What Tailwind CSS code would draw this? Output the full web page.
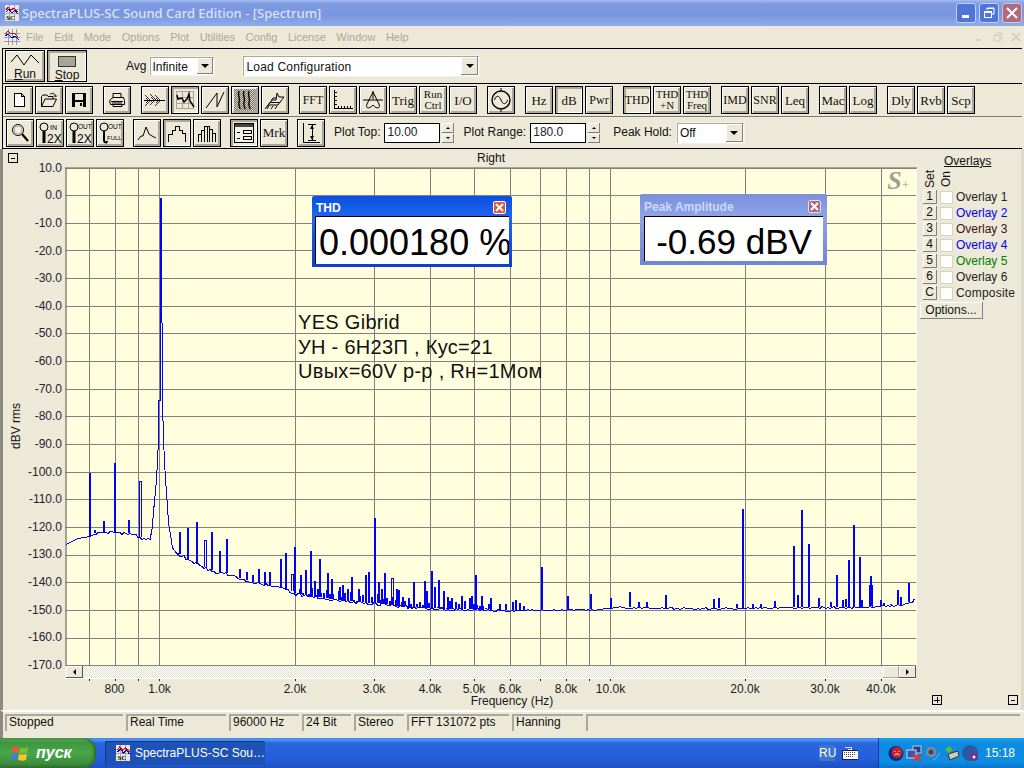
<!DOCTYPE html>
<html lang="en">
<head>
    <meta charset="UTF-8">
    <title>SpectraPLUS-SC Sound Card Edition - [Spectrum]</title>
    <script src="https://cdn.jsdelivr.net/npm/@tailwindcss/browser@4"></script>
</head>
<body class="bg-[#ece9d8]">
<div class="w-[1024px] h-[768px] overflow-hidden flex flex-col bg-[#ece9d8] text-[12px] text-[#111] font-['Liberation_Sans',sans-serif]">

    <!-- Title bar -->
    <div class="h-[26px] flex items-center bg-[linear-gradient(to_bottom,#a3bcf2_0,#7d99e0_4px,#7a96df_60%,#8fafec_100%)]">
        <svg class="ml-[5px] w-[14px] h-[16px]" viewBox="0 0 14 16" shape-rendering="crispEdges">
            <rect width="14" height="16" fill="#e8e8e0"/>
            <path d="M0 4H14M0 8H14M4 0V16M9 0V16" stroke="#aaa"/>
            <path d="M1 5L3 2L6 5L9 3L13 7" stroke="#d00" fill="none"/>
            <path d="M1 7L4 4L7 8L10 5L13 9" stroke="#00c" fill="none"/>
            <text x="1" y="15" font-size="7" font-weight="700" font-style="italic" fill="#000" class="font-['Liberation_Serif']">SC</text>
        </svg>
        <span class="ml-[3px] mt-px text-[13px] font-medium text-[#d9e4f9] font-['Noto_Sans',sans-serif]">SpectraPLUS-SC Sound Card Edition - [Spectrum]</span>
        <div class="ml-auto mr-[2px] flex gap-[3px]">
            <div class="w-[20px] h-[20px] rounded-[3px] border border-[#c4d2f4] bg-[#4f74da] flex items-end pl-[5px] pb-[4px]"><div class="w-[7px] h-[3px] bg-white"></div></div>
            <div class="w-[20px] h-[20px] rounded-[3px] border border-[#c4d2f4] bg-[#4f74da] flex items-center justify-center">
                <svg class="w-[12px] h-[12px]" viewBox="0 0 12 12" fill="none" stroke="#fff"><path d="M4 3V1H11V7H8.5M4 1.5H11" /><rect x="1.5" y="4.5" width="7" height="6"/><path d="M1.5 5.5H8.5"/></svg>
            </div>
            <div class="w-[20px] h-[20px] rounded-[3px] border border-[#dcc4cf] bg-[#b06a80] flex items-center justify-center">
                <svg class="w-[12px] h-[12px]" viewBox="0 0 12 12" stroke="#fff" stroke-width="2"><path d="M1 1L11 11M11 1L1 11"/></svg>
            </div>
        </div>
    </div>

    <!-- Menu bar -->
    <div class="h-[22px] flex items-center text-[#aca899] text-[11px]">
        <svg class="ml-[4px] w-[16px] h-[16px]" viewBox="0 0 16 16" shape-rendering="crispEdges">
            <rect width="16" height="16" fill="#eee"/>
            <path d="M0 4H16M0 8H16M0 12H16M4 0V16M8 0V16M12 0V16" stroke="#999"/>
            <path d="M1 5L4 2L7 5L10 4L14 8" stroke="#d00" fill="none"/>
            <path d="M1 7L4 5L8 9L11 7L15 11" stroke="#00c" fill="none"/>
        </svg>
        <div class="ml-[6px] flex gap-[10.5px]">
            <span>File</span><span>Edit</span><span>Mode</span><span>Options</span><span>Plot</span><span>Utilities</span><span>Config</span><span>License</span><span>Window</span><span>Help</span>
        </div>
        <div class="ml-auto mr-[3px] flex gap-[8px]">
            <svg class="w-[10px] h-[10px]" viewBox="0 0 10 10" fill="none" stroke="#cfccbc" stroke-width="1.5"><path d="M1 8H7"/></svg>
            <svg class="w-[10px] h-[10px]" viewBox="0 0 10 10" fill="none" stroke="#cfccbc"><path d="M3 3V1H9V6H7"/><rect x="1" y="3.5" width="6" height="5.5"/></svg>
            <svg class="w-[10px] h-[10px]" viewBox="0 0 10 10" fill="none" stroke="#cfccbc" stroke-width="1.6"><path d="M1 1L9 9M9 1L1 9"/></svg>
        </div>
    </div>

    <!-- Toolbars -->
    <div class="ml-[2px] mr-[2px] border-l border-black">
        <!-- Run / config row -->
        <div class="h-[36px] border-y border-black flex items-center pl-[2px]">
            <button class="w-[40px] h-[32px] border border-black bg-[#ece9d8] shadow-[inset_1px_1px_0_#fff,inset_-2px_-2px_0_#aca899] flex flex-col items-center leading-none text-[12px]">
                <svg class="mt-[3px] w-[30px] h-[13px]" viewBox="0 0 30 13" fill="none" stroke="#000"><path d="M1 8L7 1L14 11L21 1L29 9"/></svg>
                <span class="mt-[1px]"><u>R</u>un</span>
            </button>
            <button class="ml-[2px] w-[40px] h-[32px] border border-black bg-[#ece9d8] shadow-[inset_2px_2px_0_#aca899,inset_-1px_-1px_0_#fff] flex flex-col items-center leading-none text-[12px]">
                <div class="mt-[5px] w-[18px] h-[11px] bg-[#a8a598] border border-[#333]"></div>
                <span class="mt-[2px]"><u>S</u>top</span>
            </button>
            <span class="ml-[39px] text-[12px]">Avg</span>
            <div class="ml-[3px] w-[66px] h-[20px] bg-white border border-[#f4f2e8] flex items-center pl-[2px] shadow-[inset_1px_1px_0_#aca899]">
                <span class="pt-px">Infinite</span>
                <div class="ml-auto mr-[1px] w-[16px] h-[16px] bg-[#ece9d8] shadow-[inset_-1px_-1px_0_#808080,inset_1px_1px_0_#fff] flex items-center justify-center"><div class="border-x-[4px] border-x-transparent border-t-[4px] border-t-black"></div></div>
            </div>
            <div class="ml-[27px] w-[238px] h-[22px] bg-white border border-[#f4f2e8] flex items-center pl-[3px] shadow-[inset_1px_1px_0_#aca899]">
                <span class="pt-px tracking-[0.2px]">Load Configuration</span>
                <div class="ml-auto mr-[1px] w-[17px] h-[18px] bg-[#ece9d8] shadow-[inset_-1px_-1px_0_#808080,inset_1px_1px_0_#fff] flex items-center justify-center"><div class="border-x-[4px] border-x-transparent border-t-[4px] border-t-black"></div></div>
            </div>
        </div>

        <!-- Mode row -->
        <div class="h-[33px] border-b border-[#7d7b70] flex items-center pl-[2px] gap-[10px] text-[12px] leading-none font-['Liberation_Serif',serif]">
            <div class="flex gap-[2px]">
                <button class="w-[28px] h-[28px] border border-black bg-[#ece9d8] shadow-[inset_1px_1px_0_#fff,inset_-2px_-2px_0_#aca899] flex items-center justify-center">
                    <svg class="w-[14px] h-[16px]" viewBox="0 0 14 16" shape-rendering="crispEdges"><path d="M2.5 1.5H9.5L12.5 4.5V14.5H2.5Z" fill="#fff" stroke="#000"/><path d="M9.5 1.5V4.5H12.5" fill="none" stroke="#000"/></svg>
                </button>
                <button class="w-[28px] h-[28px] border border-black bg-[#ece9d8] shadow-[inset_1px_1px_0_#fff,inset_-2px_-2px_0_#aca899] flex items-center justify-center">
                    <svg class="w-[18px] h-[16px]" viewBox="0 0 18 16" fill="none" stroke="#000"><path d="M1.5 14.5V4.5L3 3H7L8 4.5H13V7"/><path d="M1.5 14.5H13L16.5 7H5L1.5 14.5Z" fill="#ece9d8"/><path d="M10 2.5C12 0.5 15 1 15.5 4M14 3.5L15.5 5L17 3.5"/></svg>
                </button>
                <button class="w-[28px] h-[28px] border border-black bg-[#ece9d8] shadow-[inset_1px_1px_0_#fff,inset_-2px_-2px_0_#aca899] flex items-center justify-center">
                    <svg class="w-[16px] h-[16px]" viewBox="0 0 16 16" shape-rendering="crispEdges"><rect x="1" y="1" width="14" height="14" fill="#000"/><rect x="4" y="2" width="8" height="6" fill="#ece9d8"/><rect x="4" y="10" width="8" height="5" fill="#ece9d8"/><rect x="9" y="11" width="2" height="3" fill="#000"/></svg>
                </button>
            </div>
            <button class="w-[28px] h-[28px] border border-black bg-[#ece9d8] shadow-[inset_1px_1px_0_#fff,inset_-2px_-2px_0_#aca899] flex items-center justify-center">
                <svg class="w-[18px] h-[16px]" viewBox="0 0 18 16" fill="none" stroke="#000"><path d="M5 5.5V1.5H13V5.5"/><path d="M1.5 8.5L5 5.5H15.5L16.5 8.5V12.5H2.5L1.5 8.5Z" fill="#ece9d8"/><path d="M3 9.5H15M4 11H14M5 12.5V14.5H14V12.5"/></svg>
            </button>
            <div class="flex gap-[2px]">
                <button class="w-[28px] h-[28px] border border-black bg-[#ece9d8] shadow-[inset_1px_1px_0_#fff,inset_-2px_-2px_0_#aca899] flex items-center justify-center">
                    <svg class="w-[22px] h-[16px]" viewBox="0 0 22 16" shape-rendering="crispEdges">
                        <defs><pattern id="dither" width="2" height="2" patternUnits="userSpaceOnUse"><rect width="1" height="1" fill="#333"/><rect x="1" y="1" width="1" height="1" fill="#333"/></pattern></defs>
                        <path d="M1 2L8 8L1 14L3 8Z" fill="url(#dither)"/><path d="M6 2L13 8L6 14L8 8Z" fill="url(#dither)"/><path d="M11 2L18 8L11 14L13 8Z" fill="url(#dither)"/><path d="M0 8H21" fill="none" stroke="#000"/>
                    </svg>
                </button>
                <button class="w-[28px] h-[28px] border border-black bg-[#ece9d8] shadow-[inset_2px_2px_0_#aca899,inset_-1px_-1px_0_#fff] flex items-center justify-center">
                    <svg class="w-[20px] h-[20px]" viewBox="0 0 20 20" fill="none" shape-rendering="crispEdges"><path d="M1.5 1.5H18.5V18.5H1.5ZM1.5 7.5H18.5M1.5 13.5H18.5M7.5 1.5V18.5M13.5 1.5V18.5" stroke="#a8a598"/><path d="M2 5L3 9L7 8L9 12L12 9L14 4L15 11L19 17" stroke="#000" stroke-width="1.5" shape-rendering="auto"/></svg>
                </button>
                <button class="w-[28px] h-[28px] border border-black bg-[#ece9d8] shadow-[inset_1px_1px_0_#fff,inset_-2px_-2px_0_#aca899] flex items-center justify-center">
                    <svg class="w-[20px] h-[20px]" viewBox="0 0 20 20" fill="none" stroke="#000"><path d="M1 18L12 3V17L19 2"/></svg>
                </button>
                <button class="w-[28px] h-[28px] border border-black bg-[#ece9d8] shadow-[inset_1px_1px_0_#fff,inset_-2px_-2px_0_#aca899] flex items-center justify-center">
                    <svg class="w-[22px] h-[22px]" viewBox="0 0 22 22" fill="none"><rect width="22" height="22" fill="#d0cdbd"/><rect width="22" height="22" fill="url(#dither)" opacity="0.55"/><path d="M5 2C3 7 7 9 5 13C4 16 6 18 6 20M10 2C8 7 12 9 10 13C9 16 11 18 11 20M15 2C13 7 17 9 15 13C14 16 16 18 16 20" stroke="#000" stroke-width="1.4"/></svg>
                </button>
                <button class="w-[28px] h-[28px] border border-black bg-[#ece9d8] shadow-[inset_1px_1px_0_#fff,inset_-2px_-2px_0_#aca899] flex items-center justify-center">
                    <svg class="w-[22px] h-[20px]" viewBox="0 0 22 20" fill="none" stroke="#000"><path d="M1 19L4 15H14L16 12M3 16.5L6 12.5H16L18 9.5M5 14L8 10H12L13 3L15 7H20L18 9.5M7 11L9 8H12M3 19L5 16M7 19L9 16M11 19L13 16"/></svg>
                </button>
            </div>
            <div class="flex gap-[2px]">
                <button class="w-[28px] h-[28px] border border-black bg-[#ece9d8] shadow-[inset_1px_1px_0_#fff,inset_-2px_-2px_0_#aca899] flex items-center justify-center text-[12px]">FFT</button>
                <button class="w-[28px] h-[28px] border border-black bg-[#ece9d8] shadow-[inset_1px_1px_0_#fff,inset_-2px_-2px_0_#aca899] flex items-center justify-center">
                    <svg class="w-[22px] h-[22px]" viewBox="0 0 22 22" fill="none" stroke="#000" shape-rendering="crispEdges"><path d="M2.5 1V19.5H21M2.5 3.5H5M2.5 7.5H5M2.5 11.5H5M2.5 15.5H5M6.5 19.5V17M9.5 19.5V17M12.5 19.5V17M15.5 19.5V17M18.5 19.5V17"/></svg>
                </button>
                <button class="w-[28px] h-[28px] border border-black bg-[#ece9d8] shadow-[inset_1px_1px_0_#fff,inset_-2px_-2px_0_#aca899] flex items-center justify-center">
                    <svg class="w-[22px] h-[22px]" viewBox="0 0 22 22" fill="none" stroke="#000"><path d="M11 2V10M1 11H21M11 3L5 15C3 20 8 20 11 16C14 20 19 20 17 15L11 3"/></svg>
                </button>
                <button class="w-[28px] h-[28px] border border-black bg-[#ece9d8] shadow-[inset_1px_1px_0_#fff,inset_-2px_-2px_0_#aca899] flex items-center justify-center text-[13px]">Trig</button>
                <button class="w-[28px] h-[28px] border border-black bg-[#ece9d8] shadow-[inset_1px_1px_0_#fff,inset_-2px_-2px_0_#aca899] flex flex-col items-center justify-center text-[11px]"><span>Run</span><span>Ctrl</span></button>
                <button class="w-[28px] h-[28px] border border-black bg-[#ece9d8] shadow-[inset_1px_1px_0_#fff,inset_-2px_-2px_0_#aca899] flex items-center justify-center text-[13px]">I/O</button>
            </div>
            <button class="w-[28px] h-[28px] border border-black bg-[#ece9d8] shadow-[inset_1px_1px_0_#fff,inset_-2px_-2px_0_#aca899] flex items-center justify-center">
                <svg class="w-[22px] h-[24px]" viewBox="0 0 22 24" fill="none" stroke="#000"><circle cx="11" cy="12" r="9" stroke-width="1.4"/><path d="M11 0V3M11 21V24M4.5 12C6 7 9 7 11 12C13 17 16 17 17.5 12"/></svg>
            </button>
            <div class="flex gap-[2px] text-[13px]">
                <button class="w-[28px] h-[28px] border border-black bg-[#ece9d8] shadow-[inset_1px_1px_0_#fff,inset_-2px_-2px_0_#aca899] flex items-center justify-center">Hz</button>
                <button class="w-[28px] h-[28px] border border-black bg-[#ece9d8] shadow-[inset_2px_2px_0_#aca899,inset_-1px_-1px_0_#fff] flex items-center justify-center">dB</button>
                <button class="w-[28px] h-[28px] border border-black bg-[#ece9d8] shadow-[inset_1px_1px_0_#fff,inset_-2px_-2px_0_#aca899] flex items-center justify-center text-[12px]">Pwr</button>
            </div>
            <div class="flex gap-[2px] text-[11px]">
                <button class="w-[28px] h-[28px] border border-black bg-[#ece9d8] shadow-[inset_2px_2px_0_#aca899,inset_-1px_-1px_0_#fff] flex items-center justify-center text-[12px]">THD</button>
                <button class="w-[28px] h-[28px] border border-black bg-[#ece9d8] shadow-[inset_1px_1px_0_#fff,inset_-2px_-2px_0_#aca899] flex flex-col items-center justify-center"><span>THD</span><span>+N</span></button>
                <button class="w-[28px] h-[28px] border border-black bg-[#ece9d8] shadow-[inset_1px_1px_0_#fff,inset_-2px_-2px_0_#aca899] flex flex-col items-center justify-center"><span>THD</span><span>Freq</span></button>
            </div>
            <div class="flex gap-[2px] text-[12px]">
                <button class="w-[28px] h-[28px] border border-black bg-[#ece9d8] shadow-[inset_1px_1px_0_#fff,inset_-2px_-2px_0_#aca899] flex items-center justify-center">IMD</button>
                <button class="w-[28px] h-[28px] border border-black bg-[#ece9d8] shadow-[inset_1px_1px_0_#fff,inset_-2px_-2px_0_#aca899] flex items-center justify-center">SNR</button>
                <button class="w-[28px] h-[28px] border border-black bg-[#ece9d8] shadow-[inset_1px_1px_0_#fff,inset_-2px_-2px_0_#aca899] flex items-center justify-center text-[13px]">Leq</button>
            </div>
            <div class="flex gap-[2px] text-[13px]">
                <button class="w-[28px] h-[28px] border border-black bg-[#ece9d8] shadow-[inset_1px_1px_0_#fff,inset_-2px_-2px_0_#aca899] flex items-center justify-center">Mac</button>
                <button class="w-[28px] h-[28px] border border-black bg-[#ece9d8] shadow-[inset_1px_1px_0_#fff,inset_-2px_-2px_0_#aca899] flex items-center justify-center">Log</button>
            </div>
            <div class="flex gap-[2px] text-[13px]">
                <button class="w-[28px] h-[28px] border border-black bg-[#ece9d8] shadow-[inset_1px_1px_0_#fff,inset_-2px_-2px_0_#aca899] flex items-center justify-center">Dly</button>
                <button class="w-[28px] h-[28px] border border-black bg-[#ece9d8] shadow-[inset_1px_1px_0_#fff,inset_-2px_-2px_0_#aca899] flex items-center justify-center">Rvb</button>
                <button class="w-[28px] h-[28px] border border-black bg-[#ece9d8] shadow-[inset_1px_1px_0_#fff,inset_-2px_-2px_0_#aca899] flex items-center justify-center">Scp</button>
            </div>
        </div>

        <!-- Zoom / plot settings row -->
        <div class="h-[32px] border-b border-black flex items-start pt-[2px] pl-[3px] text-[12px]">
            <div class="flex gap-[2px]">
                <button class="w-[28px] h-[28px] border border-black bg-[#ece9d8] shadow-[inset_1px_1px_0_#fff,inset_-2px_-2px_0_#aca899] flex items-center justify-center">
                    <svg class="w-[20px] h-[20px]" viewBox="0 0 20 20" fill="none" stroke="#000"><circle cx="8" cy="7" r="5.5" fill="#f4f2e8"/><circle cx="8" cy="7" r="3.8" stroke="#aaa"/><path d="M12 11L18 18" stroke-width="2.2"/></svg>
                </button>
                <button class="w-[28px] h-[28px] border border-black bg-[#ece9d8] shadow-[inset_1px_1px_0_#fff,inset_-2px_-2px_0_#aca899] flex items-center justify-center">
                    <svg class="w-[24px] h-[24px]" viewBox="0 0 24 24" fill="none" stroke="#000"><circle cx="6" cy="6" r="4"/><path d="M6 10V22" stroke-width="3"/><text x="12" y="9" font-size="7" fill="#000" stroke="none" class="font-['Liberation_Sans']">IN</text><text x="9" y="22" font-size="12" fill="#000" stroke="none" class="font-['Liberation_Sans']">2X</text></svg>
                </button>
                <button class="w-[28px] h-[28px] border border-black bg-[#ece9d8] shadow-[inset_1px_1px_0_#fff,inset_-2px_-2px_0_#aca899] flex items-center justify-center">
                    <svg class="w-[24px] h-[24px]" viewBox="0 0 24 24" fill="none" stroke="#000"><circle cx="6" cy="6" r="4"/><path d="M6 10V22" stroke-width="3"/><text x="10" y="8" font-size="6.5" fill="#000" stroke="none" class="font-['Liberation_Sans']">OUT</text><text x="9" y="22" font-size="12" fill="#000" stroke="none" class="font-['Liberation_Sans']">2X</text></svg>
                </button>
                <button class="w-[28px] h-[28px] border border-black bg-[#ece9d8] shadow-[inset_1px_1px_0_#fff,inset_-2px_-2px_0_#aca899] flex items-center justify-center">
                    <svg class="w-[24px] h-[24px]" viewBox="0 0 24 24" fill="none" stroke="#000"><circle cx="6" cy="6" r="4"/><path d="M6 10V19C6 22 9 22 9 20" stroke-width="2"/><text x="10" y="8" font-size="6.5" fill="#000" stroke="none" class="font-['Liberation_Sans']">OUT</text><text x="9" y="19" font-size="6" fill="#000" stroke="none" class="font-['Liberation_Sans']">FULL</text></svg>
                </button>
            </div>
            <div class="ml-[9px] flex gap-[2px]">
                <button class="w-[28px] h-[28px] border border-black bg-[#ece9d8] shadow-[inset_1px_1px_0_#fff,inset_-2px_-2px_0_#aca899] flex items-center justify-center">
                    <svg class="w-[20px] h-[20px]" viewBox="0 0 20 20" fill="none" stroke="#000"><path d="M1 17L4 13L6 13L9 4L12 11L15 13L19 15"/></svg>
                </button>
                <button class="w-[28px] h-[28px] border border-black bg-[#ece9d8] shadow-[inset_2px_2px_0_#aca899,inset_-1px_-1px_0_#fff] flex items-center justify-center">
                    <svg class="w-[20px] h-[20px]" viewBox="0 0 20 20" fill="none" stroke="#000" shape-rendering="crispEdges"><path d="M1.5 19V11.5H5.5V7.5H8.5V3.5H12.5V7.5H15.5V10.5H18.5V19"/></svg>
                </button>
                <button class="w-[28px] h-[28px] border border-black bg-[#ece9d8] shadow-[inset_1px_1px_0_#fff,inset_-2px_-2px_0_#aca899] flex items-center justify-center">
                    <svg class="w-[20px] h-[20px]" viewBox="0 0 20 20" fill="none" stroke="#000" shape-rendering="crispEdges"><path d="M1.5 19V11.5H4.5V7.5H7.5V3.5H12.5V6.5H15.5V10.5H18.5V19M4.5 11V19M7.5 7V19M10.5 3V19M12.5 6V19M15.5 10V19"/></svg>
                </button>
            </div>
            <div class="ml-[9px] flex gap-[2px]">
                <button class="w-[28px] h-[28px] border border-black bg-[#ece9d8] shadow-[inset_2px_2px_0_#aca899,inset_-1px_-1px_0_#fff] flex items-center justify-center">
                    <svg class="w-[22px] h-[22px]" viewBox="0 0 22 22" fill="none" stroke="#000" shape-rendering="crispEdges"><rect x="1.5" y="1.5" width="19" height="19" fill="#f4f2e8"/><rect x="2" y="2" width="18" height="3" fill="#444" stroke="none"/><path d="M10.5 8.5H18.5V11.5H10.5ZM10.5 14.5H18.5V17.5H10.5ZM4 10H7M4 16H7"/></svg>
                </button>
                <button class="w-[28px] h-[28px] border border-black bg-[#ece9d8] shadow-[inset_1px_1px_0_#fff,inset_-2px_-2px_0_#aca899] flex items-center justify-center text-[13px] font-['Liberation_Serif',serif]">Mrk</button>
            </div>
            <button class="ml-[9px] w-[28px] h-[28px] border border-black bg-[#ece9d8] shadow-[inset_1px_1px_0_#fff,inset_-2px_-2px_0_#aca899] flex items-center justify-center">
                <svg class="w-[20px] h-[22px]" viewBox="0 0 20 22" fill="none" stroke="#000" shape-rendering="crispEdges"><path d="M2.5 1V20.5H19M7 2.5H15M7 18.5H15M11 3V18"/><path d="M11 3L9 7H13ZM11 18L9 14H13Z" fill="#000" stroke="none" shape-rendering="auto"/></svg>
            </button>
            <span class="ml-[9px] mt-[7px] leading-none">Plot Top:</span>
            <div class="ml-[4px] mt-[4px] w-[56px] h-[20px] bg-white border border-black pl-[2px] leading-[17px] text-[12px] text-[#223]">10.00</div>
            <div class="ml-[2px] mt-[4px] w-[12px] h-[20px] flex flex-col gap-px">
                <div class="flex-1 bg-[#ece9d8] shadow-[inset_-1px_-1px_0_#808080,inset_1px_1px_0_#fff] flex items-center justify-center"><div class="border-x-[2px] border-x-transparent border-b-[2px] border-b-black"></div></div>
                <div class="flex-1 bg-[#ece9d8] shadow-[inset_-1px_-1px_0_#808080,inset_1px_1px_0_#fff] flex items-center justify-center"><div class="border-x-[2px] border-x-transparent border-t-[2px] border-t-black"></div></div>
            </div>
            <span class="ml-[9px] mt-[7px] leading-none">Plot Range:</span>
            <div class="ml-[4px] mt-[4px] w-[56px] h-[20px] bg-white border border-black pl-[2px] leading-[17px] text-[12px] text-[#223]">180.0</div>
            <div class="ml-[2px] mt-[4px] w-[12px] h-[20px] flex flex-col gap-px">
                <div class="flex-1 bg-[#ece9d8] shadow-[inset_-1px_-1px_0_#808080,inset_1px_1px_0_#fff] flex items-center justify-center"><div class="border-x-[2px] border-x-transparent border-b-[2px] border-b-black"></div></div>
                <div class="flex-1 bg-[#ece9d8] shadow-[inset_-1px_-1px_0_#808080,inset_1px_1px_0_#fff] flex items-center justify-center"><div class="border-x-[2px] border-x-transparent border-t-[2px] border-t-black"></div></div>
            </div>
            <span class="ml-[13px] mt-[7px] leading-none">Peak Hold:</span>
            <div class="ml-[4px] mt-[3px] w-[69px] h-[22px] bg-white border border-[#f4f2e8] flex items-center pl-[3px] shadow-[inset_1px_1px_0_#aca899]">
                <span>Off</span>
                <div class="ml-auto mr-[1px] w-[17px] h-[18px] bg-[#ece9d8] shadow-[inset_-1px_-1px_0_#808080,inset_1px_1px_0_#fff] flex items-center justify-center"><div class="border-x-[4px] border-x-transparent border-t-[4px] border-t-black"></div></div>
            </div>
        </div>
    </div>

    <!-- Plot window -->
    <div class="h-[561px] flex border-l-[3px] border-[#8c8a7e]">
        <!-- Y axis -->
        <div class="w-[62px] flex">
            <div class="w-[25px] flex flex-col items-start pl-[5px]">
                <button class="mt-[4px] w-[10px] h-[10px] border border-black bg-[#ece9d8] flex items-center justify-center"><div class="w-[4px] h-px bg-black"></div></button>
                <span class="mt-[240px] ml-[2px] [writing-mode:vertical-rl] rotate-180 leading-none">dBV rms</span>
            </div>
            <div class="w-[37px] pt-[5px] grid grid-rows-[repeat(19,27.61px)] text-[#2a2030]">
                <div class="flex items-center justify-end">10.0<i class="ml-[4px] w-[2px] h-px bg-[#555]"></i></div>
                <div class="flex items-center justify-end">0.0<i class="ml-[4px] w-[2px] h-px bg-[#555]"></i></div>
                <div class="flex items-center justify-end">-10.0<i class="ml-[4px] w-[2px] h-px bg-[#555]"></i></div>
                <div class="flex items-center justify-end">-20.0<i class="ml-[4px] w-[2px] h-px bg-[#555]"></i></div>
                <div class="flex items-center justify-end">-30.0<i class="ml-[4px] w-[2px] h-px bg-[#555]"></i></div>
                <div class="flex items-center justify-end">-40.0<i class="ml-[4px] w-[2px] h-px bg-[#555]"></i></div>
                <div class="flex items-center justify-end">-50.0<i class="ml-[4px] w-[2px] h-px bg-[#555]"></i></div>
                <div class="flex items-center justify-end">-60.0<i class="ml-[4px] w-[2px] h-px bg-[#555]"></i></div>
                <div class="flex items-center justify-end">-70.0<i class="ml-[4px] w-[2px] h-px bg-[#555]"></i></div>
                <div class="flex items-center justify-end">-80.0<i class="ml-[4px] w-[2px] h-px bg-[#555]"></i></div>
                <div class="flex items-center justify-end">-90.0<i class="ml-[4px] w-[2px] h-px bg-[#555]"></i></div>
                <div class="flex items-center justify-end">-100.0<i class="ml-[4px] w-[2px] h-px bg-[#555]"></i></div>
                <div class="flex items-center justify-end">-110.0<i class="ml-[4px] w-[2px] h-px bg-[#555]"></i></div>
                <div class="flex items-center justify-end">-120.0<i class="ml-[4px] w-[2px] h-px bg-[#555]"></i></div>
                <div class="flex items-center justify-end">-130.0<i class="ml-[4px] w-[2px] h-px bg-[#555]"></i></div>
                <div class="flex items-center justify-end">-140.0<i class="ml-[4px] w-[2px] h-px bg-[#555]"></i></div>
                <div class="flex items-center justify-end">-150.0<i class="ml-[4px] w-[2px] h-px bg-[#555]"></i></div>
                <div class="flex items-center justify-end">-160.0<i class="ml-[4px] w-[2px] h-px bg-[#555]"></i></div>
                <div class="flex items-center justify-end">-170.0<i class="ml-[4px] w-[2px] h-px bg-[#555]"></i></div>
            </div>
        </div>

        <!-- Plot column -->
        <div class="w-[852px] flex flex-col">
            <div class="h-[18px] flex items-center justify-center">Right</div>
            <div class="relative h-[499px] bg-[#ffffdd] border-r border-white">
                <svg class="absolute inset-0 w-[852px] h-[499px]" viewBox="65 167 852 499" shape-rendering="crispEdges">
                    <path fill="none" stroke="#a5a296" stroke-width="2" d="M65 167.5H917M65.5 167V666"/>
                    <path fill="none" stroke="#808080" d="M65 168.5H916M65 195.5H916M65 223.5H916M65 250.5H916M65 278.5H916M65 306.5H916M65 333.5H916M65 361.5H916M65 389.5H916M65 416.5H916M65 444.5H916M65 472.5H916M65 499.5H916M65 527.5H916M65 555.5H916M65 582.5H916M65 610.5H916M65 638.5H916M65 665.5H916M89.5 168V666M115.5 168V666M138.5 168V666M159.5 168V666M295.5 168V666M374.5 168V666M430.5 168V666M474.5 168V666M510.5 168V666M540.5 168V666M566.5 168V666M589.5 168V666M610.5 168V666M745.5 168V666M825.5 168V666M881.5 168V666"/>
                    <path id="spikes" fill="none" stroke="#0000ff" stroke-width="2"/>
                    <path id="outline" fill="none" stroke="#0000ff"/>
                </svg>

                <span class="absolute right-[7px] top-[1px] text-[26px] leading-none italic font-bold text-[#a09f94] font-['Liberation_Serif',serif]">S<span class="text-[13px] font-normal not-italic">+</span></span>

                <!-- Annotation -->
                <div class="absolute left-[233px] top-[143px] text-[20px] leading-[24.5px] tracking-[0.3px] text-[#111] whitespace-nowrap">
                    <div>YES Gibrid</div>
                    <div>УН - 6Н23П , Кус=21</div>
                    <div>Uвых=60V p-p , Rн=1Мом</div>
                </div>

                <!-- THD meter -->
                <div class="absolute left-[247px] top-[29px] w-[200px] h-[71px] rounded-t-[2px] bg-[linear-gradient(to_bottom,#0a4fe0,#1f66ee_30%,#0a3fd0)] p-[3px] pt-0 flex flex-col">
                    <div class="h-[18px] flex items-center pl-[1px] pr-[3px] text-[12px] font-bold text-white">
                        <span class="mt-[6px]">THD</span>
                        <div class="ml-auto mt-[4px] w-[13px] h-[13px] rounded-[2px] bg-[#e0583a] border border-white flex items-center justify-center"><svg class="w-[9px] h-[9px]" viewBox="0 0 9 9" stroke="#fff" stroke-width="2"><path d="M1 1L8 8M8 1L1 8"/></svg></div>
                    </div>
                    <div class="flex-1 mt-[2px] bg-white border-t border-l border-black text-[36px] leading-[52px] pl-[3px] text-black whitespace-nowrap overflow-hidden">0.000180 %</div>
                </div>

                <!-- Peak amplitude meter -->
                <div class="absolute left-[575px] top-[27px] w-[187px] h-[71px] rounded-t-[2px] bg-[linear-gradient(to_bottom,#7b8fdc,#8da3e8_30%,#6f86d8)] p-[4px] pt-0 flex flex-col">
                    <div class="h-[19px] flex items-center pr-[2px] text-[12px] font-bold text-[#cdd8f6]">
                        <span class="mt-[7px]">Peak Amplitude</span>
                        <div class="ml-auto mt-[5px] w-[13px] h-[13px] rounded-[2px] bg-[#b06a80] border border-[#e6dbe6] flex items-center justify-center"><svg class="w-[9px] h-[9px]" viewBox="0 0 9 9" stroke="#fff" stroke-width="2"><path d="M1 1L8 8M8 1L1 8"/></svg></div>
                    </div>
                    <div class="flex-1 mt-[3px] bg-white border-t border-l border-black text-[35px] leading-[50px] text-center text-black whitespace-nowrap overflow-hidden">-0.69 dBV</div>
                </div>
            </div>

            <!-- Scroll bar -->
            <div class="h-[12px] mr-px flex bg-[repeating-conic-gradient(#e4e1d0_0_25%,#fff_0_50%)] bg-[length:2px_2px]">
                <div class="w-[17px] ml-px bg-[#ece9d8] shadow-[inset_-1px_-1px_0_#555,inset_1px_1px_0_#fff] flex items-center justify-center"><div class="border-y-[3px] border-y-transparent border-r-[3px] border-r-black"></div></div>
                <div class="ml-auto w-[16px] bg-[#ece9d8] shadow-[inset_-1px_-1px_0_#aca899,inset_1px_1px_0_#fff]"></div>
                <div class="w-[17px] bg-[#ece9d8] shadow-[inset_-1px_-1px_0_#555,inset_1px_1px_0_#fff] flex items-center justify-center"><div class="border-y-[3px] border-y-transparent border-l-[3px] border-l-black"></div></div>
            </div>

            <!-- X axis -->
            <div class="h-px bg-white"></div>
            <svg class="w-[852px] h-[31px] fill-[#1a1a24] text-[12px]" viewBox="65 679 852 31" text-anchor="middle">
                <path shape-rendering="crispEdges" fill="none" stroke="#222" d="M89.5 679V681M115.5 679V681M138.5 679V681M159.5 679V681M295.5 679V681M374.5 679V681M430.5 679V681M474.5 679V681M510.5 679V681M540.5 679V681M566.5 679V681M589.5 679V681M610.5 679V681M745.5 679V681M825.5 679V681M881.5 679V681"/>
                <text x="114.5" y="693">800</text><text x="159.5" y="693">1.0k</text><text x="295" y="693">2.0k</text><text x="374" y="693">3.0k</text><text x="430" y="693">4.0k</text><text x="474" y="693">5.0k</text><text x="510" y="693">6.0k</text><text x="566" y="693">8.0k</text><text x="610.5" y="693">10.0k</text><text x="745" y="693">20.0k</text><text x="825" y="693">30.0k</text><text x="881" y="693">40.0k</text>
                <text x="512" y="705">Frequency (Hz)</text>
            </svg>
        </div>

        <!-- Overlays panel -->
        <div class="flex-1 flex flex-col border-r-[3px] border-[#dcd9c8]">
            <div class="pt-[5px] pl-[27px] leading-[14px]"><u>Overlays</u></div>
            <div class="h-[21px] pl-[7px] flex gap-[2px] leading-none">
                <span class="w-[14px] [writing-mode:vertical-rl] rotate-180 text-center">Set</span>
                <span class="w-[14px] [writing-mode:vertical-rl] rotate-180 text-center">On</span>
            </div>
            <div class="pl-[6px] flex flex-col">
                <label class="h-[16px] flex items-center"><span class="w-[14px] h-[14px] bg-[#ece9d8] border-b border-r border-[#808080] shadow-[inset_1px_1px_0_#fff] text-center leading-[13px]">1</span><span class="ml-[3px] w-[13px] h-[13px] bg-white border border-[#d6d3c2]"></span><span class="ml-[3px] text-[#222]">Overlay 1</span></label>
                <label class="h-[16px] flex items-center"><span class="w-[14px] h-[14px] bg-[#ece9d8] border-b border-r border-[#808080] shadow-[inset_1px_1px_0_#fff] text-center leading-[13px]">2</span><span class="ml-[3px] w-[13px] h-[13px] bg-white border border-[#d6d3c2]"></span><span class="ml-[3px] text-[#0000ff]">Overlay 2</span></label>
                <label class="h-[16px] flex items-center"><span class="w-[14px] h-[14px] bg-[#ece9d8] border-b border-r border-[#808080] shadow-[inset_1px_1px_0_#fff] text-center leading-[13px]">3</span><span class="ml-[3px] w-[13px] h-[13px] bg-white border border-[#d6d3c2]"></span><span class="ml-[3px] text-[#401010]">Overlay 3</span></label>
                <label class="h-[16px] flex items-center"><span class="w-[14px] h-[14px] bg-[#ece9d8] border-b border-r border-[#808080] shadow-[inset_1px_1px_0_#fff] text-center leading-[13px]">4</span><span class="ml-[3px] w-[13px] h-[13px] bg-white border border-[#d6d3c2]"></span><span class="ml-[3px] text-[#0000ff]">Overlay 4</span></label>
                <label class="h-[16px] flex items-center"><span class="w-[14px] h-[14px] bg-[#ece9d8] border-b border-r border-[#808080] shadow-[inset_1px_1px_0_#fff] text-center leading-[13px]">5</span><span class="ml-[3px] w-[13px] h-[13px] bg-white border border-[#d6d3c2]"></span><span class="ml-[3px] text-[#008000]">Overlay 5</span></label>
                <label class="h-[16px] flex items-center"><span class="w-[14px] h-[14px] bg-[#ece9d8] border-b border-r border-[#808080] shadow-[inset_1px_1px_0_#fff] text-center leading-[13px]">6</span><span class="ml-[3px] w-[13px] h-[13px] bg-white border border-[#d6d3c2]"></span><span class="ml-[3px] text-[#222]">Overlay 6</span></label>
                <label class="h-[16px] flex items-center"><span class="w-[14px] h-[14px] bg-[#ece9d8] border-b border-r border-[#808080] shadow-[inset_1px_1px_0_#fff] text-center leading-[13px]">C</span><span class="ml-[3px] w-[13px] h-[13px] bg-white border border-[#d6d3c2]"></span><span class="ml-[3px] text-[#222] tracking-[0.2px]">Composite</span></label>
            </div>
            <button class="ml-[3px] mt-px w-[63px] h-[17px] bg-[#ece9d8] border-r border-b border-[#808080] shadow-[inset_1px_1px_0_#fff] leading-none">Options...</button>
            <div class="mt-auto mb-[5px] pl-[15px] pr-[3px] flex justify-between">
                <button class="w-[10px] h-[10px] border border-black relative flex items-center justify-center"><div class="w-[6px] h-px bg-black"></div><div class="absolute w-px h-[6px] bg-black"></div></button>
                <button class="w-[10px] h-[10px] border border-black flex items-center justify-center"><div class="w-[4px] h-px bg-black"></div></button>
            </div>
        </div>
    </div>

    <!-- Status bar -->
    <div class="h-[28px] border-t-2 border-white pt-[2px] pl-[2px] pr-[4px] flex gap-[3px] border-l-[3px] border-l-[#8c8a7e]">
        <div class="w-[118px] h-[17px] border-t-2 border-l-2 border-[#aca899] pl-[2px] leading-[13px]">Stopped</div>
        <div class="w-[100px] h-[17px] border-t-2 border-l-2 border-[#aca899] pl-[2px] leading-[13px]">Real Time</div>
        <div class="w-[70px] h-[17px] border-t-2 border-l-2 border-[#aca899] pl-[2px] leading-[13px]">96000 Hz</div>
        <div class="w-[49px] h-[17px] border-t-2 border-l-2 border-[#aca899] pl-[2px] leading-[13px]">24 Bit</div>
        <div class="w-[50px] h-[17px] border-t-2 border-l-2 border-[#aca899] pl-[2px] leading-[13px]">Stereo</div>
        <div class="w-[102px] h-[17px] border-t-2 border-l-2 border-[#aca899] pl-[2px] leading-[13px]">FFT 131072 pts</div>
        <div class="w-[71px] h-[17px] border-t-2 border-l-2 border-[#aca899] pl-[2px] leading-[13px]">Hanning</div>
        <div class="flex-1 h-[17px] border-t-2 border-l-2 border-[#aca899]"></div>
    </div>

    <!-- Taskbar -->
    <div class="h-[30px] flex items-stretch text-white bg-[linear-gradient(to_bottom,#3f87f2_0,#4b95f4_2px,#2a65dd_5px,#245edb_70%,#1d50c0_100%)]">
        <div class="w-[96px] rounded-r-[12px] flex items-center pl-[11px] bg-[linear-gradient(to_bottom,#5aa85a_0,#3f963f_15%,#48a648_50%,#3c8e3c_85%,#2f6f2f_100%)] shadow-[inset_-2px_0_3px_#2a6a2a]">
            <svg class="w-[18px] h-[17px]" viewBox="0 0 18 17"><path d="M1 3C3 1 5 1 8 2L7 7.5C5 7 3 7 1 8.5Z" fill="#e85a30"/><path d="M9 2.5C12 3.5 14 3.5 17 2L16 8C13 9 11 9 8 8Z" fill="#7cbc30"/><path d="M1 9.5C3 8 5 8 7 8.5L6 14.5C4 14 2 14 0 15.5Z" fill="#3f80e4"/><path d="M8 9C11 10 13 10 16 9L15 15C12 16 10 16 7 15Z" fill="#f6c82c"/></svg>
            <span class="ml-[7px] text-[16px] font-bold italic leading-none">пуск</span>
        </div>
        <div class="ml-[9px] my-[3px] w-[160px] rounded-[2px] bg-[#1e52b7] shadow-[inset_1px_1px_1px_#14377f] flex items-center pl-[11px] text-[12px]">
            <svg class="w-[15px] h-[16px]" viewBox="0 0 14 16" shape-rendering="crispEdges">
                <rect width="14" height="16" fill="#e8e8e0"/>
                <path d="M0 4H14M0 8H14M4 0V16M9 0V16" stroke="#aaa"/>
                <path d="M1 5L3 2L6 5L9 3L13 7" stroke="#d00" fill="none"/>
                <path d="M1 7L4 4L7 8L10 5L13 9" stroke="#00c" fill="none"/>
                <text x="1" y="15" font-size="7" font-weight="700" fill="#000" class="font-['Liberation_Serif']">SC</text>
            </svg>
            <span class="ml-[4px] whitespace-nowrap">SpectraPLUS-SC Sou…</span>
        </div>
        <div class="ml-auto flex items-center">
            <span class="w-[16px] h-[16px] bg-[#3c74d0] text-[12px] text-center leading-[16px]">RU</span>
            <svg class="ml-[7px] w-[16px] h-[14px]" viewBox="0 0 16 14" shape-rendering="crispEdges"><path d="M3 1H9V3H6" stroke="#dde" fill="none"/><rect x="0" y="4" width="16" height="9" fill="#fff" stroke="#223"/><path d="M2 6H14M2 8H14M4 10H12" stroke="#445" stroke-dasharray="1 1"/></svg>
        </div>
        <div class="ml-[20px] w-[146px] border-l border-[#0a3f9a] flex items-center pl-[9px] bg-[linear-gradient(to_bottom,#17a0ee_0,#0e8ae0_20%,#0d8de2_80%,#0b70cc_100%)]">
            <svg class="w-[16px] h-[17px]" viewBox="0 0 16 17"><circle cx="8" cy="8.5" r="7.5" fill="#0a2a80"/><circle cx="9" cy="7.5" r="5.5" fill="#c8202a"/><path d="M7 6V7M11 6V7M6.5 10C8 8.5 10 8.5 11.5 10" stroke="#fff" fill="none"/></svg>
            <svg class="ml-[2px] w-[17px] h-[17px]" viewBox="0 0 17 17"><rect x="7" y="1" width="8" height="7" fill="#2a3f80" stroke="#c0c8e0"/><rect x="1" y="5" width="9" height="8" fill="#3a5aa8" stroke="#d0d4e8"/><path d="M7 9L15 16M15 9L7 16" stroke="#e8302a" stroke-width="2"/></svg>
            <svg class="ml-[2px] w-[16px] h-[17px]" viewBox="0 0 16 17"><circle cx="6" cy="7" r="5" fill="#889"/><circle cx="6" cy="7" r="2.5" fill="#445"/><path d="M8 15C11 14 13 11 15 8" stroke="#9ab" fill="none"/></svg>
            <svg class="ml-[3px] w-[16px] h-[17px]" viewBox="0 0 16 17"><path d="M1 4L6 1L8 5L5 9Z" fill="#58c030"/><path d="M4 9L14 6L15 11L6 15Z" fill="#c8ccc0" stroke="#333"/></svg>
            <svg class="ml-[2px] w-[16px] h-[16px]" viewBox="0 0 16 16"><circle cx="8" cy="8" r="8" fill="#2a5aa0"/><circle cx="12" cy="12" r="4" fill="#7a2a9a"/><circle cx="12" cy="12" r="1.5" fill="#fff"/></svg>
            <span class="ml-[7px] text-[12px]">15:18</span>
        </div>
    </div>
</div>

<script>
    // baseline control points, screen px
    const base = [[66,544],[75,540],[80,538],[87,537],[95,533],[110,532],[125,533],[135,534],[143,539],[150,538],[152,530],[154,501],
        [178,553],[190,560],[200,565],[210,570],[220,572],[230,574],[240,578],[250,581],[260,583],[270,585],[280,587],[295,593],[310,596],[320,597],[340,600],[350,601],[375,603],[400,606],[430,608],[450,609],[480,609],[500,610],[540,610],[600,609],[620,607],[680,608],[720,608],[860,607],[880,606],[900,605],[910,602],[915,600]];
    // [x, top]
    const spikes = [[90,473],[95,530],[104,521],[115,463],[129,520],[180,532],[188,528],[197,522],[212,532],[220,551],[227,539],[240,569],[247,572],[253,575],[259,569],[265,572],[270,572],[281,559],[286,553],[295,547],[301,575],[306,570],[311,551],[315,581],[320,559],[328,573],[332,579],[340,587],[343,585],[348,589],[352,577],[359,589],[366,575],[369,572],[375,518],[379,582],[382,589],[385,573],[393,597],[397,589],[399,590],[403,597],[409,598],[414,582],[425,581],[427,591],[432,571],[435,587],[439,580],[444,591],[448,597],[452,598],[462,596],[470,598],[472,596],[476,575],[482,596],[491,598],[500,604],[506,604],[513,602],[516,600],[520,603],[524,606],[542,567],[568,596],[591,594],[611,598],[630,592],[639,602],[647,602],[666,595],[714,599],[719,598],[737,604],[743,509],[753,604],[761,604],[775,601],[794,546],[798,595],[802,510],[809,544],[819,598],[831,602],[837,575],[843,600],[846,599],[849,560],[854,525],[860,557],[862,600],[871,576],[881,600],[884,603],[891,604],[898,590],[901,597],[909,583],[914,599]];
    // narrow open boxes: [x0, x1, top]
    const boxes = [[139,141,481],[204,206,540],[291,293,574],[391,393,578],[869,872,585]];
    const peak = [[154,501],[156,480],[158,440],[158,400],[160,400],[160,292],[160,198],[161,198],[161,292],[162,352],[162,400],[163,440],[165,480],[166,492],[168,523],[170,535],[172,548],[176,553],[178,553]];

    function baseAt(x) {
        for (let i = 1; i < base.length; i++) {
            if (x <= base[i][0]) {
                const [x0, y0] = base[i - 1], [x1, y1] = base[i];
                return y0 + (y1 - y0) * (x - x0) / (x1 - x0);
            }
        }
        return 600;
    }
    function noise(x) {
        const s = Math.sin(x * 12.9898) * 43758.5453;
        return (s - Math.floor(s)) * 2 - 1;
    }

    let d = '';
    for (let x = 66; x <= 152; x += 2) d += (d ? 'L' : 'M') + x + ' ' + (Math.round(baseAt(x) + noise(x)) + 0.5);
    peak.forEach(p => d += 'L' + p[0] + '.5 ' + p[1]);
    for (let x = 178; x <= 915; x += 2) d += 'L' + x + ' ' + (Math.round(baseAt(x) + noise(x) * (x > 500 ? 0.8 : 1.5)) + 0.5);
    boxes.forEach(b => {
        const y = Math.round(baseAt(b[0]));
        d += 'M' + b[0] + '.5 ' + y + 'V' + b[2] + '.5H' + b[1] + '.5V' + y;
    });
    document.getElementById('outline').setAttribute('d', d);

    let s = 'M161 198V292';
    spikes.forEach(p => s += 'M' + p[0] + ' ' + p[1] + 'V' + Math.round(baseAt(p[0])));
    // grass of small lines under the dense part of the spectrum
    for (let x = 300; x <= 490; x += 3) {
        const y = Math.round(baseAt(x));
        s += 'M' + x + ' ' + (y - Math.round(Math.abs(noise(x + 0.5)) * 9)) + 'V' + y;
    }
    document.getElementById('spikes').setAttribute('d', s);
</script>
</body>
</html>
